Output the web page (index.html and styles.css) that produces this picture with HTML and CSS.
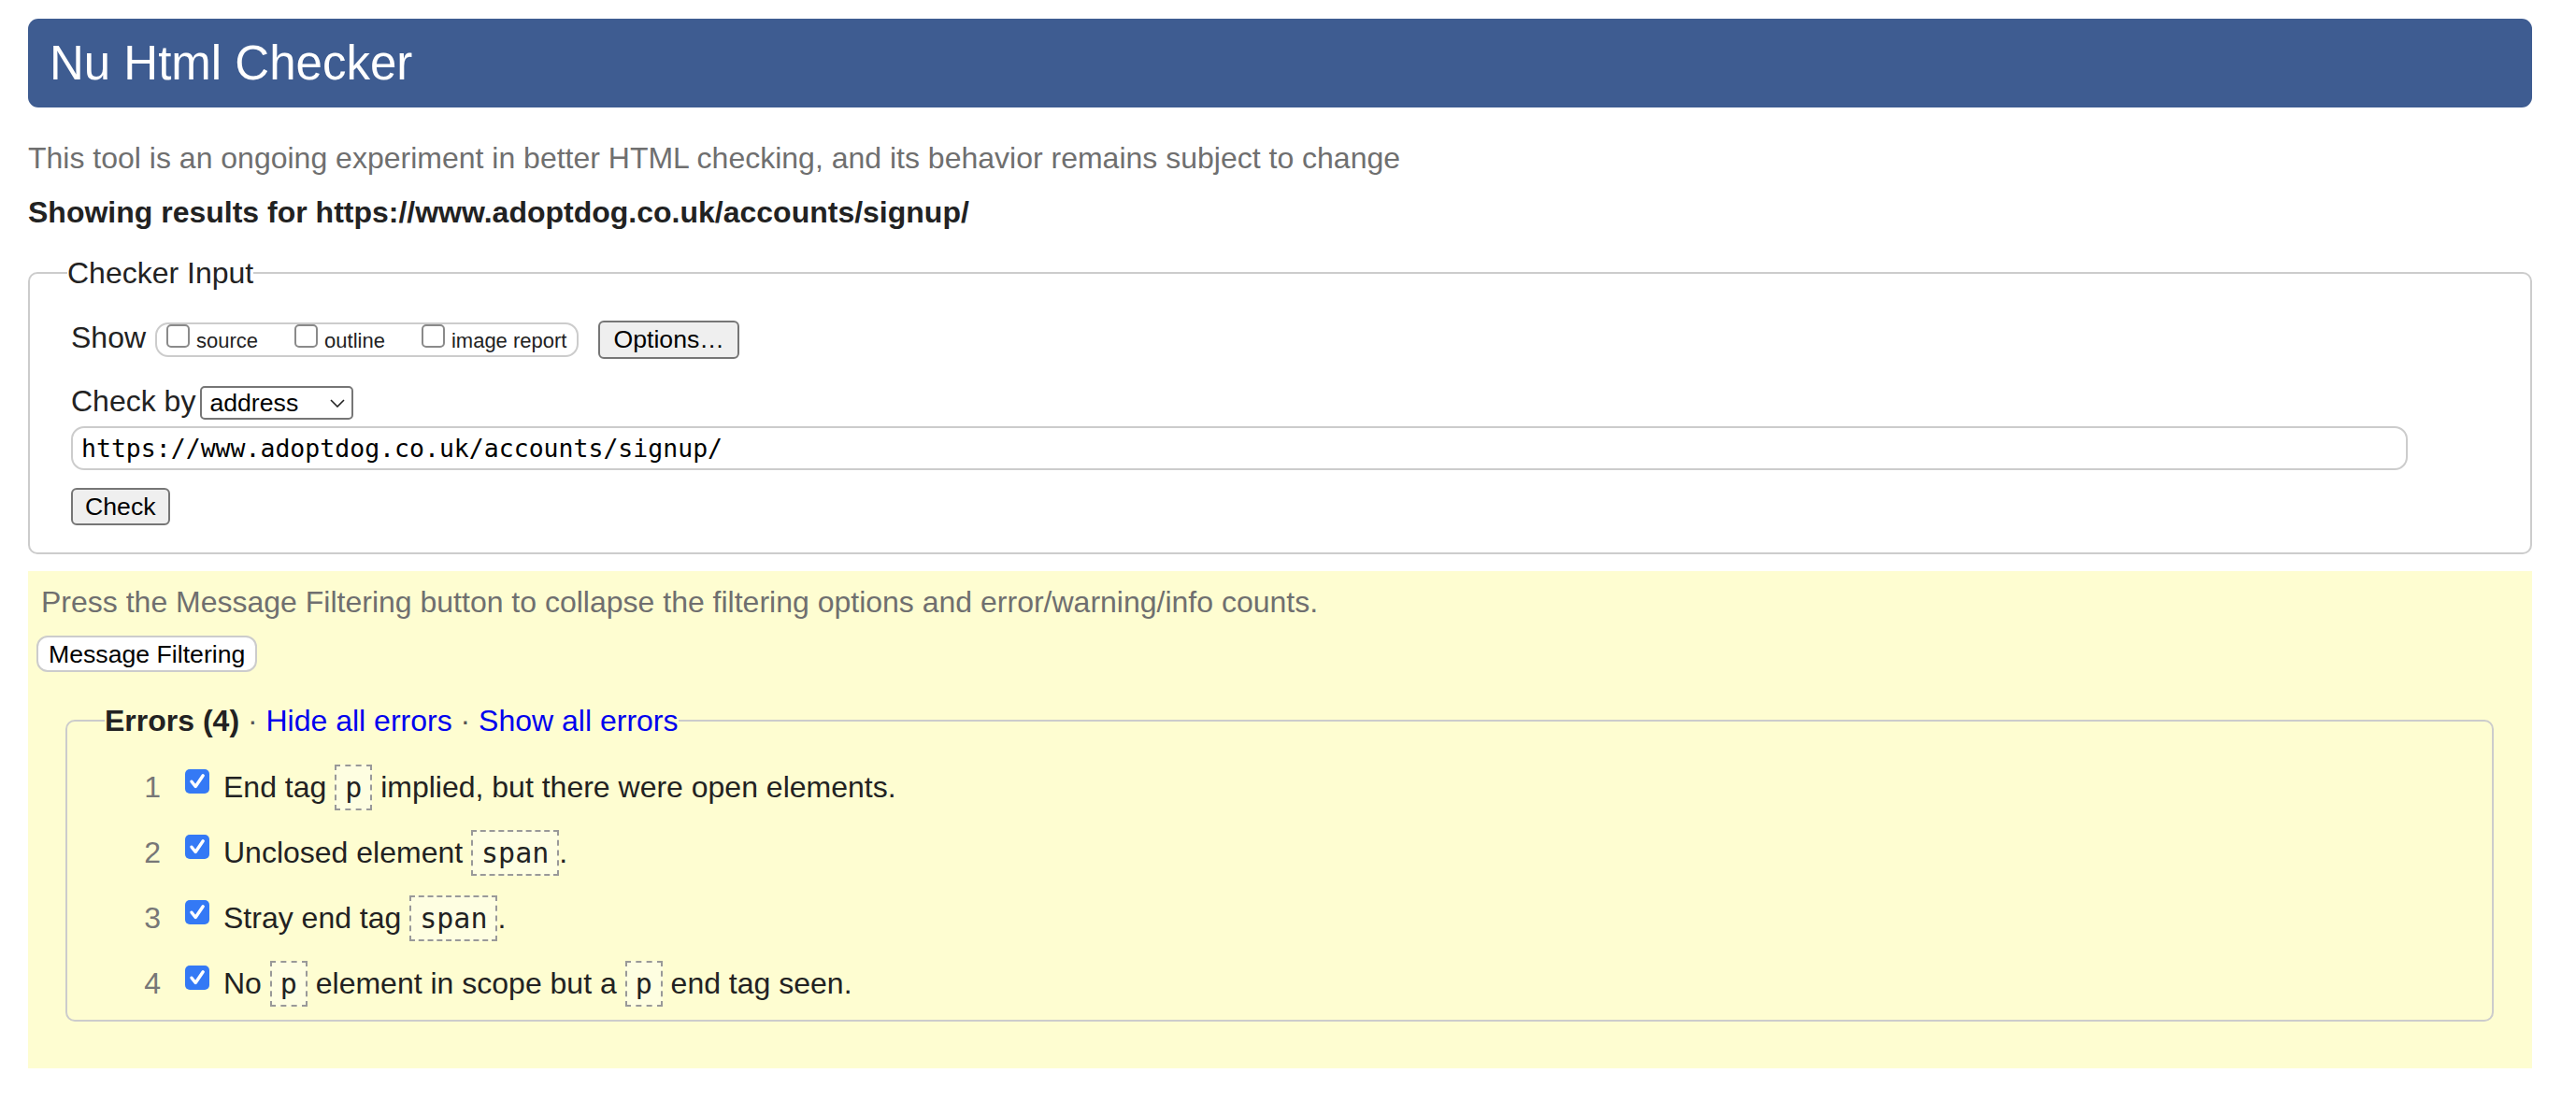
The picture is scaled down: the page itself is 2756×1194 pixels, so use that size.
FILE: index.html
```html
<!DOCTYPE html>
<html lang="en">
<head>
<meta charset="utf-8">
<title>Nu Html Checker</title>
<link rel="stylesheet" href="styles.css">
</head>
<body>
<div class="page">
  <h1 class="title">Nu Html Checker</h1>
  <p class="intro">This tool is an ongoing experiment in better HTML checking, and its behavior remains subject to change</p>
  <p class="showing">Showing results for https://www.adoptdog.co.uk/accounts/signup/</p>

  <fieldset class="checker">
    <legend class="legend">Checker Input</legend>
    <div class="fs-body">
      <div class="show-row">
        <span class="row-label">Show</span>
        <span class="show-group">
          <label class="opt"><span class="cb"></span>source</label>
          <label class="opt"><span class="cb"></span>outline</label>
          <label class="opt"><span class="cb"></span>image report</label>
        </span>
        <button class="btn btn-options" type="button">Options…</button>
      </div>
      <div class="by-row">
        <span class="row-label">Check by</span>
        <span class="select"><span class="select-text">address</span><svg class="chev" width="16" height="9" viewBox="0 0 16 9"><polyline points="1,1 8,8 15,1" fill="none" stroke="#222" stroke-width="1.6"/></svg></span>
      </div>
      <div class="url">https://www.adoptdog.co.uk/accounts/signup/</div>
      <button class="btn btn-check" type="button">Check</button>
    </div>
  </fieldset>

  <section class="results">
    <p class="press">Press the Message Filtering button to collapse the filtering options and error/warning/info counts.</p>
    <button class="btn-filter" type="button">Message Filtering</button>
    <fieldset class="errors">
      <legend class="legend"><b class="err-title">Errors (4)</b><span class="sep"> · </span><a class="lnk" href="#">Hide all errors</a><span class="sep"> · </span><a class="lnk" href="#">Show all errors</a></legend>
      <div class="err"><span class="num">1</span><span class="ck"><svg width="26" height="26" viewBox="0 0 26 26"><path d="M7 13.2 L11.2 18.5 L19.2 6.8" fill="none" stroke="#fff" stroke-width="3.4" stroke-linecap="round" stroke-linejoin="round"/></svg></span>End tag <code class="tag">p</code> implied, but there were open elements.</div>
      <div class="err"><span class="num">2</span><span class="ck"><svg width="26" height="26" viewBox="0 0 26 26"><path d="M7 13.2 L11.2 18.5 L19.2 6.8" fill="none" stroke="#fff" stroke-width="3.4" stroke-linecap="round" stroke-linejoin="round"/></svg></span>Unclosed element <code class="tag">span</code>.</div>
      <div class="err"><span class="num">3</span><span class="ck"><svg width="26" height="26" viewBox="0 0 26 26"><path d="M7 13.2 L11.2 18.5 L19.2 6.8" fill="none" stroke="#fff" stroke-width="3.4" stroke-linecap="round" stroke-linejoin="round"/></svg></span>Stray end tag <code class="tag">span</code>.</div>
      <div class="err"><span class="num">4</span><span class="ck"><svg width="26" height="26" viewBox="0 0 26 26"><path d="M7 13.2 L11.2 18.5 L19.2 6.8" fill="none" stroke="#fff" stroke-width="3.4" stroke-linecap="round" stroke-linejoin="round"/></svg></span>No <code class="tag">p</code> element in scope but a <code class="tag">p</code> end tag seen.</div>
    </fieldset>
  </section>
</div>
</body>
</html>
```

FILE: styles.css
```css
html, body {
  background: #ffffff;
}
body {
  margin: 0;
  padding: 20px 0 0 30px;
  font-family: "Liberation Sans", Arial, Helvetica, sans-serif;
  font-size: 32px;
  color: #222222;
}
.page {
  width: 2679px;
}
.title {
  margin: 0;
  height: 95px;
  padding-left: 23px;
  background: #3e5c91;
  color: #ffffff;
  border-radius: 11px;
  font-size: 51px;
  font-weight: normal;
  line-height: 95px;
}
.intro {
  margin: 34px 0 0;
  line-height: 40px;
  color: #6f6f6f;
}
.showing {
  margin: 18px 0 0;
  line-height: 40px;
  font-weight: bold;
  color: #222222;
}
.checker {
  margin: 27px 0 0;
  border: 2px solid #cccccc;
  border-radius: 10px;
  padding: 33px 0 29px 40px;
  min-width: 0;
}
.legend {
  padding: 0;
  font-size: 32px;
  line-height: 36px;
  color: #222222;
}
.fs-body {
  padding-left: 4px;
}
.show-row, .by-row {
  display: flex;
  align-items: baseline;
}
.by-row {
  margin-top: 27px;
}
.row-label {
  line-height: 36px;
}
.show-group {
  display: flex;
  align-items: baseline;
  margin-left: 10px;
  border: 2px solid #cccccc;
  border-radius: 14px;
  padding: 0 11px 3px 10px;
  font-size: 22px;
  line-height: 25px;
  color: #222222;
}
.opt {
  display: block;
  white-space: nowrap;
}
.opt + .opt {
  margin-left: 39px;
}
.cb {
  display: inline-block;
  box-sizing: border-box;
  width: 25px;
  height: 25px;
  margin-right: 7px;
  border: 2px solid #8a8a8a;
  border-radius: 5px;
  background: #ffffff;
  vertical-align: baseline;
}
.btn {
  font-family: "Liberation Sans", Arial, Helvetica, sans-serif;
  font-size: 26.67px;
  line-height: 30px;
  color: #000000;
  background: #efefef;
  border: 2px solid #767676;
  border-radius: 6px;
  margin: 0;
}
.btn-options {
  margin-left: 21px;
  padding: 3px 14px 4px;
}
.select {
  display: inline-flex;
  align-items: center;
  justify-content: space-between;
  box-sizing: border-box;
  width: 164px;
  height: 36px;
  margin-left: 5px;
  padding: 0 7px 0 8px;
  border: 2px solid #767676;
  border-radius: 5px;
  background: #ffffff;
  font-size: 26.67px;
  line-height: 30px;
  color: #000000;
}
.chev {
  display: block;
}
.url {
  box-sizing: border-box;
  width: 2500px;
  height: 47px;
  margin-top: 7px;
  padding: 0 9px;
  border: 2px solid #cccccc;
  border-radius: 14px;
  font-family: "DejaVu Sans Mono", "Liberation Mono", monospace;
  font-size: 26.5px;
  line-height: 43px;
  color: #000000;
}
.btn-check {
  display: block;
  margin-top: 19px;
  padding: 3px 13px;
}
.results {
  display: flow-root;
  margin-top: 18px;
  background: #fefdd1;
}
.press {
  margin: 15px 0 0 14px;
  line-height: 36px;
  color: #6f6f6f;
}
.btn-filter {
  display: block;
  margin: 18px 0 0 9px;
  padding: 2.5px 11px;
  font-family: "Liberation Sans", Arial, Helvetica, sans-serif;
  font-size: 26.67px;
  line-height: 30px;
  color: #000000;
  background: #ffffff;
  border: 2px solid #cccccc;
  border-radius: 12px;
}
.errors {
  margin: 34px 41px 50px 40px;
  border: 2px solid #cccccc;
  border-radius: 10px;
  padding: 18px 0 4px 40px;
  min-width: 0;
}
.err-title {
  font-weight: bold;
  color: #222222;
}
.sep {
  color: #555555;
}
.lnk {
  color: #0000ee;
  text-decoration: none;
}
.err {
  line-height: 70px;
  white-space: nowrap;
  color: #222222;
}
.num {
  display: inline-block;
  width: 60px;
  text-align: right;
  color: #777777;
}
.ck {
  display: inline-block;
  width: 26px;
  height: 26px;
  margin: 0 15px 4px 26px;
  border-radius: 5px;
  background: #3479f5;
  vertical-align: baseline;
}
.ck svg {
  display: block;
}
.tag {
  display: inline-block;
  padding: 0 9px;
  border: 2px dashed #999999;
  background: rgba(255, 255, 255, 0.35);
  font-family: "DejaVu Sans Mono", "Liberation Mono", monospace;
  font-size: 30px;
  line-height: 45px;
  color: #222222;
  vertical-align: baseline;
}
```
